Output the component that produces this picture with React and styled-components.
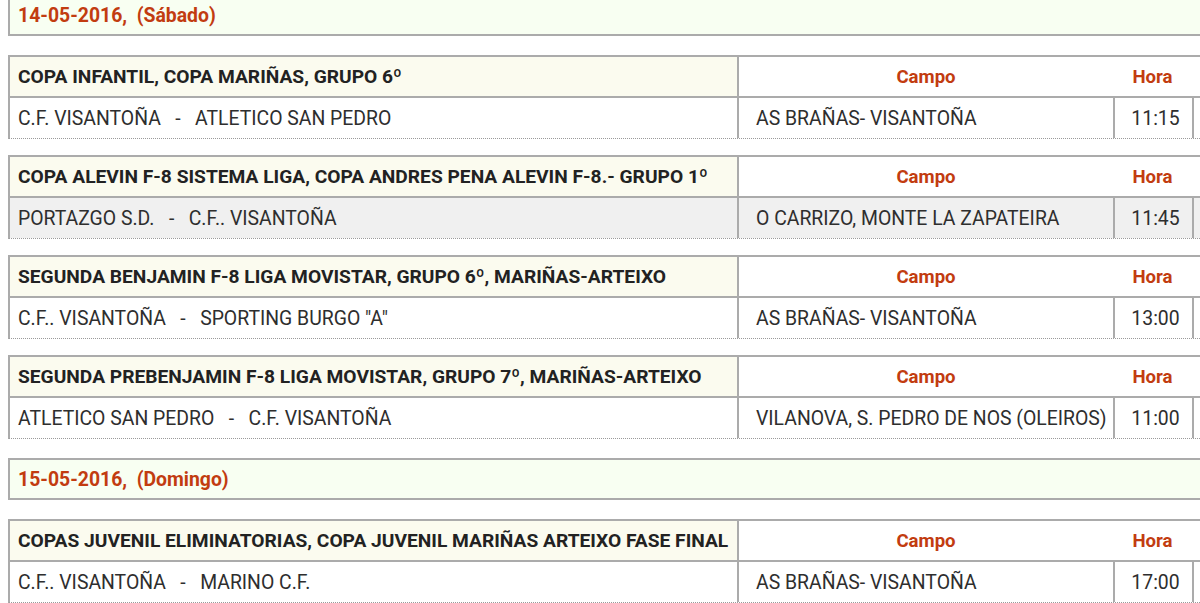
import React from 'react';
import styled, { createGlobalStyle } from 'styled-components';

const GlobalStyle = createGlobalStyle`
  html, body {
    margin: 0;
    padding: 0;
    background: #fff;
    overflow: hidden;
  }
  body {
    font-family: Roboto, 'Liberation Sans', Arial, sans-serif;
  }
`;

const Page = styled.main`
  display: flex;
  flex-direction: column;
  width: 1260px;
  padding-left: 8px;
  margin-top: -6px;
`;

const DateBox = styled.div`
  height: 38px;
  display: flex;
  align-items: center;
  padding-left: 8px;
  border: 2px solid #ababab;
  background: #f8fff2;
  color: #c23c10;
  font-size: 19.4px;
  font-weight: 700;
  white-space: pre;
  margin-bottom: 19px;
`;

const Table = styled.section`
  display: flex;
  flex-direction: column;
  border-top: 2px solid #ababab;
  border-left: 2px solid #ababab;
  border-bottom: 1px dotted #9a9a9a;
  margin-bottom: ${(p) => (p.$last ? '19px' : '16px')};
`;

const Row = styled.div`
  display: grid;
  grid-template-columns: 727px 376px 79px 1fr;
  height: ${(p) => (p.$head ? '39px' : '40px')};
  border-bottom: ${(p) => (p.$head ? '2px solid #ababab' : 'none')};
  background: ${(p) => (p.$shade ? '#f0f0f0' : '#fff')};
`;

const Cell = styled.div`
  display: flex;
  align-items: center;
  white-space: pre;
  overflow: hidden;
  border-left: ${(p) => (p.$line ? '2px solid #ababab' : 'none')};
  justify-content: ${(p) => (p.$center ? 'center' : 'flex-start')};
  padding-left: ${(p) => p.$pad || 0}px;
`;

const Title = styled(Cell)`
  background: #fbfbef;
  color: #222;
  font-size: 19.2px;
  font-weight: 700;
`;

const Label = styled(Cell)`
  color: #c23c10;
  font-size: 18.6px;
  font-weight: 700;
`;

const Value = styled(Cell)`
  color: #2e2e2e;
  font-size: 19.4px;
`;

const matches = [
  {
    date: '14-05-2016,  (Sábado)',
    games: [
      {
        title: 'COPA INFANTIL, COPA MARIÑAS, GRUPO 6º',
        teams: 'C.F. VISANTOÑA   -   ATLETICO SAN PEDRO',
        campo: 'AS BRAÑAS- VISANTOÑA',
        hora: '11:15',
      },
      {
        title: 'COPA ALEVIN F-8 SISTEMA LIGA, COPA ANDRES PENA ALEVIN F-8.- GRUPO 1º',
        teams: 'PORTAZGO S.D.   -   C.F.. VISANTOÑA',
        campo: 'O CARRIZO, MONTE LA ZAPATEIRA',
        hora: '11:45',
        shade: true,
      },
      {
        title: 'SEGUNDA BENJAMIN F-8 LIGA MOVISTAR, GRUPO 6º, MARIÑAS-ARTEIXO',
        teams: 'C.F.. VISANTOÑA   -   SPORTING BURGO "A"',
        campo: 'AS BRAÑAS- VISANTOÑA',
        hora: '13:00',
      },
      {
        title: 'SEGUNDA PREBENJAMIN F-8 LIGA MOVISTAR, GRUPO 7º, MARIÑAS-ARTEIXO',
        teams: 'ATLETICO SAN PEDRO   -   C.F. VISANTOÑA',
        campo: 'VILANOVA, S. PEDRO DE NOS (OLEIROS)',
        hora: '11:00',
      },
    ],
  },
  {
    date: '15-05-2016,  (Domingo)',
    games: [
      {
        title: 'COPAS JUVENIL ELIMINATORIAS, COPA JUVENIL MARIÑAS ARTEIXO FASE FINAL',
        teams: 'C.F.. VISANTOÑA   -   MARINO C.F.',
        campo: 'AS BRAÑAS- VISANTOÑA',
        hora: '17:00',
      },
    ],
  },
];

const Game = ({ game, last }) => (
  <Table $last={last}>
    <Row $head>
      <Title $pad={8}>{game.title}</Title>
      <Label $line $center>Campo</Label>
      <Label $center>Hora</Label>
      <Cell />
    </Row>
    <Row $shade={game.shade}>
      <Value $pad={8}>{game.teams}</Value>
      <Value $line $pad={17}>{game.campo}</Value>
      <Value $line $center $pad={4}>{game.hora}</Value>
      <Value $line />
    </Row>
  </Table>
);

export default function App() {
  return (
    <>
      <GlobalStyle />
      <Page>
        {matches.map((day) => (
          <React.Fragment key={day.date}>
            <DateBox>{day.date}</DateBox>
            {day.games.map((g, i) => (
              <Game key={g.title} game={g} last={i === day.games.length - 1} />
            ))}
          </React.Fragment>
        ))}
      </Page>
    </>
  );
}
